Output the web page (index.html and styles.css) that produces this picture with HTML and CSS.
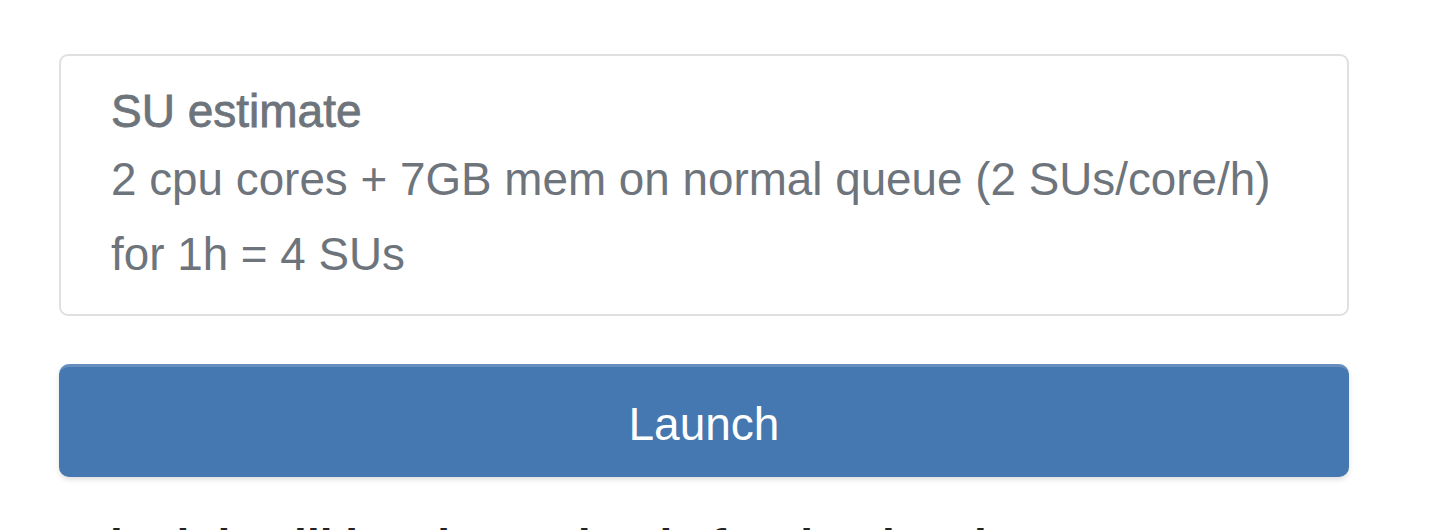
FILE: index.html
```html
<!DOCTYPE html>
<html lang="en">
<head>
<meta charset="utf-8">
<title>SU estimate</title>
<link rel="stylesheet" href="styles.css">
</head>
<body>
<main class="page">
  <section class="card">
    <h2 class="card-title">SU estimate</h2>
    <p class="card-text">2 cpu cores + 7GB mem on normal queue (2 SUs/core/h) for 1h = 4 SUs</p>
  </section>
  <button class="btn-launch" type="button">Launch</button>
  <p class="note">The job will be charged only for the time it runs.</p>
</main>
</body>
</html>
```
FILE: styles.css
```css
html, body {
  margin: 0;
  padding: 0;
  background: #ffffff;
}
body {
  font-family: "Liberation Sans", Arial, Helvetica, sans-serif;
  overflow: hidden;
  height: 530px;
}
.page {
  width: 1290px;
  padding: 54px 0 0 59px;
  display: flex;
  flex-direction: column;
}
.card {
  border: 2px solid #e0e0e0;
  border-radius: 9px;
  padding: 29px 51px 26px 50px;
  color: #6d747c;
  height: 262px;
  box-sizing: border-box;
}
.card-title {
  margin: 0;
  font-size: 46px;
  font-weight: 400;
  -webkit-text-stroke: 0.8px currentColor;
  line-height: 52px;
}
.card-text {
  margin: 5px 0 0;
  font-size: 45.8px;
  line-height: 75px;
}
.btn-launch {
  margin-top: 48px;
  height: 113px;
  width: 100%;
  padding: 6px 0 0;
  border: none;
  border-radius: 10px;
  background: #4577b1;
  color: #ffffff;
  font-family: inherit;
  font-size: 46px;
  box-shadow: inset 0 4px 0 -1px rgba(255,255,255,0.18), 0 3px 5px rgba(0,0,0,0.12);
  cursor: pointer;
}
.note {
  margin: 42px 0 0 23px;
  font-size: 46px;
  font-weight: 700;
  color: #222;
  white-space: nowrap;
}
```
